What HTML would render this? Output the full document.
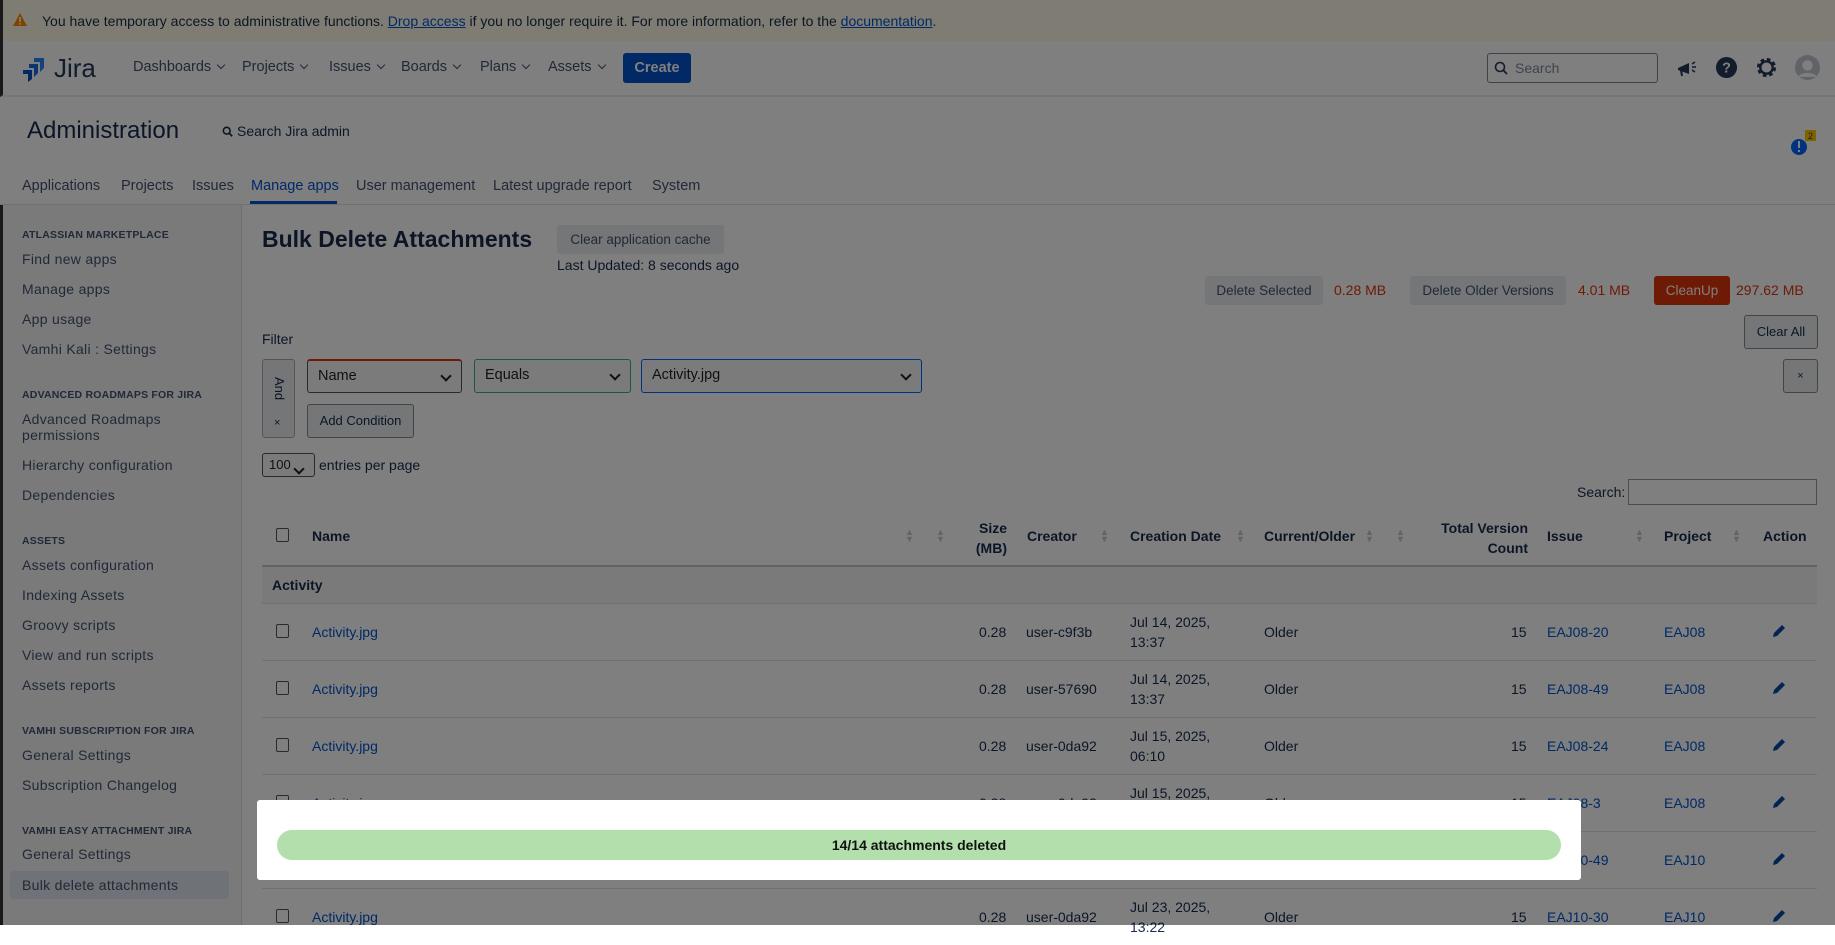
<!DOCTYPE html>
<html><head><meta charset="utf-8">
<style>
*{box-sizing:border-box;margin:0;padding:0}
body{width:1835px;height:925px;overflow:hidden;position:relative;background:#fff;font-family:"Liberation Sans",sans-serif;font-size:14px;color:#172b4d}
.a{position:absolute;white-space:nowrap}
.lnk{color:#0052cc}
.banner{left:0;top:0;width:1835px;height:41px;background:#fffae6;border-left:3px solid #333}
.hdr{left:0;top:41px;width:1835px;height:56px;background:#fff;border-bottom:2px solid #ebecf0;border-left:3px solid #333}
.nav{font-size:14.5px;color:#42526e}
.chev{display:inline-block;margin-left:7px;width:6px;height:6px;border-right:1.8px solid #42526e;border-bottom:1.8px solid #42526e;transform:rotate(45deg);position:relative;top:-3px}
.side{left:0;top:205px;width:242px;height:720px;background:#f4f5f7;border-right:1px solid #dfe1e6;border-left:3px solid #333}
.sh{font-size:10.5px;font-weight:bold;color:#42526e;left:22px;letter-spacing:0.2px}
.si{font-size:14px;color:#42526e;left:22px;letter-spacing:0.3px}
.btn{background:#ebecf0;border-radius:3px;color:#42526e;font-size:14px;text-align:center}
.sel{border:1px solid #555;border-radius:3px;background:#f7f7f7;font-size:14.5px;padding-left:10px;line-height:31px;color:#222}
.sel:after{content:"";position:absolute;right:11px;top:11px;width:6px;height:6px;border-right:2px solid #222;border-bottom:2px solid #222;transform:rotate(45deg)}
.th{font-weight:bold;font-size:14px;color:#172b4d}
.row{left:262px;width:1555px;height:57px;border-top:1px solid #dfe1e6}
.cb{width:13px;height:14px;border:1px solid #555;border-radius:2px;background:#fff}
.ov{left:0;top:0;width:1835px;height:925px;background:rgba(0,0,0,0.5)}
.sort{color:#c1c7d0;font-size:9px;line-height:7px}
</style></head><body>

<div class="a banner"></div>
<svg class="a" style="left:13px;top:13px" width="14" height="13" viewBox="0 0 14 13"><path d="M7 0L14 13H0z" fill="#ff8b00"/><rect x="6.2" y="4" width="1.6" height="5" fill="#fff"/><rect x="6.2" y="10" width="1.6" height="1.6" fill="#fff"/></svg>
<div class="a" style="left:42px;top:13px;font-size:14px;color:#172b4d">You have temporary access to administrative functions. <span class="lnk" style="text-decoration:underline">Drop access</span> if you no longer require it. For more information, refer to the <span class="lnk" style="text-decoration:underline">documentation</span>.</div>

<div class="a hdr"></div>
<svg class="a" style="left:22px;top:56px" width="24" height="26" viewBox="0 0 24 26"><path d="M12 2h10v10l-4 4V6h-6z" fill="#2684ff"/><path d="M7 8h9v9l-4 4V12H7z" fill="#1868db"/><path d="M1 14h9v9l-4 3V18H1z" fill="#0052cc"/></svg>
<div class="a" style="left:54px;top:53px;font-size:26px;color:#253858">Jira</div>
<div class="a nav" style="left:133px;top:59px">Dashboards<span class="chev"></span></div>
<div class="a nav" style="left:242px;top:59px">Projects<span class="chev"></span></div>
<div class="a nav" style="left:329px;top:59px">Issues<span class="chev"></span></div>
<div class="a nav" style="left:401px;top:59px">Boards<span class="chev"></span></div>
<div class="a nav" style="left:480px;top:59px">Plans<span class="chev"></span></div>
<div class="a nav" style="left:548px;top:59px">Assets<span class="chev"></span></div>
<div class="a" style="left:623px;top:53px;width:68px;height:30px;background:#0052cc;border-radius:3px;color:#fff;font-weight:bold;font-size:14.5px;text-align:center;line-height:30px">Create</div>
<div class="a" style="left:1487px;top:53px;width:171px;height:30px;border:1px solid #7a869a;border-radius:3px;background:#fff"></div>
<svg class="a" style="left:1494px;top:61px" width="14" height="14" viewBox="0 0 14 14"><circle cx="6" cy="6" r="4.5" stroke="#253858" stroke-width="1.6" fill="none"/><path d="M9.3 9.3L13 13" stroke="#253858" stroke-width="1.8"/></svg>
<div class="a" style="left:1515px;top:60px;font-size:14px;color:#7a869a">Search</div>
<svg class="a" style="left:1676px;top:57px" width="22" height="22" viewBox="0 0 22 22"><path d="M2 11l11-5v11L2 13z" fill="#253858"/><path d="M5 13l1 6" stroke="#253858" stroke-width="2"/><path d="M16 7l3-2M16 10h4M16 13l3 2" stroke="#253858" stroke-width="1.6"/></svg>
<svg class="a" style="left:1715px;top:56px" width="23" height="23" viewBox="0 0 24 24"><circle cx="12" cy="12" r="11" fill="#253858"/><text x="12" y="17" text-anchor="middle" font-family="Liberation Sans" font-weight="bold" font-size="15" fill="#fff">?</text></svg>
<svg class="a" style="left:1755px;top:56px" width="23" height="23" viewBox="0 0 24 24"><circle cx="12" cy="12" r="8" fill="none" stroke="#253858" stroke-width="4" stroke-dasharray="3.5 2.8"/><circle cx="12" cy="12" r="6.5" fill="none" stroke="#253858" stroke-width="2.5"/></svg>
<svg class="a" style="left:1795px;top:55px" width="25" height="25" viewBox="0 0 24 24"><circle cx="12" cy="12" r="12" fill="#c1c7d0"/><circle cx="12" cy="10" r="5" fill="#fff"/><path d="M3 21c2-5 16-5 18 0" fill="#fff"/></svg>

<div class="a" style="left:27px;top:117px;font-size:24px;color:#172b4d">Administration</div>
<svg class="a" style="left:222px;top:126px" width="11" height="11" viewBox="0 0 14 14"><circle cx="6" cy="6" r="4.3" stroke="#172b4d" stroke-width="2" fill="none"/><path d="M9 9l4 4" stroke="#172b4d" stroke-width="2.2"/></svg>
<div class="a" style="left:237px;top:123px;font-size:14px;color:#172b4d">Search Jira admin</div>
<svg class="a" style="left:1790px;top:128px" width="30" height="28" viewBox="0 0 30 28"><circle cx="9" cy="19" r="8" fill="#0065ff"/><rect x="8" y="13" width="2" height="7" fill="#fff"/><rect x="8" y="22" width="2" height="2" fill="#fff"/><rect x="15" y="2" width="11" height="11" fill="#ffc400"/><text x="20.5" y="11" text-anchor="middle" font-size="9" font-family="Liberation Sans" fill="#333">2</text></svg>

<div class="a" style="left:0;top:204px;width:1835px;height:1px;background:#dfe1e6"></div>
<div class="a nav" style="left:22px;top:178px">Applications</div>
<div class="a nav" style="left:121px;top:178px">Projects</div>
<div class="a nav" style="left:192px;top:178px">Issues</div>
<div class="a nav" style="left:251px;top:178px;color:#0052cc">Manage apps</div>
<div class="a" style="left:250px;top:201px;width:87px;height:3px;background:#0052cc"></div>
<div class="a nav" style="left:356px;top:178px">User management</div>
<div class="a nav" style="left:493px;top:178px">Latest upgrade report</div>
<div class="a nav" style="left:652px;top:178px">System</div>

<div class="a side"></div>
<div class="a" style="left:10px;top:871px;width:219px;height:28px;background:#dfe6f0;border-radius:3px"></div>
<div class="a sh" style="top:229px">ATLASSIAN MARKETPLACE</div>
<div class="a si" style="top:251px">Find new apps</div>
<div class="a si" style="top:281px">Manage apps</div>
<div class="a si" style="top:311px">App usage</div>
<div class="a si" style="top:341px">Vamhi Kali : Settings</div>
<div class="a sh" style="top:389px">ADVANCED ROADMAPS FOR JIRA</div>
<div class="a si" style="top:411px;line-height:16px">Advanced Roadmaps<br>permissions</div>
<div class="a si" style="top:457px">Hierarchy configuration</div>
<div class="a si" style="top:487px">Dependencies</div>
<div class="a sh" style="top:535px">ASSETS</div>
<div class="a si" style="top:557px">Assets configuration</div>
<div class="a si" style="top:587px">Indexing Assets</div>
<div class="a si" style="top:617px">Groovy scripts</div>
<div class="a si" style="top:647px">View and run scripts</div>
<div class="a si" style="top:677px">Assets reports</div>
<div class="a sh" style="top:725px">VAMHI SUBSCRIPTION FOR JIRA</div>
<div class="a si" style="top:747px">General Settings</div>
<div class="a si" style="top:777px">Subscription Changelog</div>
<div class="a sh" style="top:825px">VAMHI EASY ATTACHMENT JIRA</div>
<div class="a si" style="top:846px">General Settings</div>
<div class="a si" style="top:877px">Bulk delete attachments</div>

<div class="a" style="left:262px;top:226px;font-size:23px;font-weight:bold;color:#172b4d">Bulk Delete Attachments</div>
<div class="a btn" style="left:557px;top:225px;width:167px;height:29px;line-height:29px;font-size:13.5px">Clear application cache</div>
<div class="a" style="left:557px;top:257px;font-size:14px">Last Updated: 8 seconds ago</div>

<div class="a btn" style="left:1205px;top:276px;width:118px;height:29px;line-height:29px;font-size:13.5px">Delete Selected</div>
<div class="a" style="left:1334px;top:282px;color:#de350b">0.28 MB</div>
<div class="a btn" style="left:1410px;top:276px;width:156px;height:29px;line-height:29px;font-size:13.5px">Delete Older Versions</div>
<div class="a" style="left:1578px;top:282px;color:#de350b">4.01 MB</div>
<div class="a btn" style="left:1654px;top:276px;width:76px;height:29px;line-height:29px;background:#de350b;color:#fff;font-size:13.5px">CleanUp</div>
<div class="a" style="left:1736px;top:282px;color:#de350b">297.62 MB</div>
<div class="a btn" style="left:1744px;top:315px;width:74px;height:34px;line-height:32px;border:1px solid #888;font-size:13px;color:#172b4d">Clear All</div>

<div class="a" style="left:262px;top:331px">Filter</div>
<div class="a btn" style="left:262px;top:359px;width:33px;height:79px;border:1px solid #aaa"></div>
<div class="a" style="top:377px;font-size:13px;transform:rotate(90deg);transform-origin:left top;left:287px">And</div>
<div class="a" style="left:274px;top:417px;font-size:11px">×</div>
<div class="a sel" style="left:307px;top:359px;width:155px;height:34px;border-top:2px solid #de350b">Name</div>
<div class="a sel" style="left:474px;top:359px;width:157px;height:34px;border-color:#36b37e">Equals</div>
<div class="a sel" style="left:641px;top:359px;width:281px;height:34px;border-color:#0065ff">Activity.jpg</div>
<div class="a btn" style="left:1783px;top:359px;width:35px;height:34px;border:1px solid #888;line-height:32px;font-size:11px;color:#172b4d">×</div>
<div class="a btn" style="left:307px;top:404px;width:107px;height:34px;border:1px solid #888;line-height:32px;font-size:13px;color:#172b4d">Add Condition</div>

<div class="a sel" style="left:262px;top:453px;width:53px;height:24px;line-height:22px;padding-left:6px;font-size:13px">100</div>
<div class="a" style="left:319px;top:457px;font-size:14px">entries per page</div>
<div class="a" style="left:1577px;top:484px;font-size:14px">Search:</div>
<div class="a" style="left:1628px;top:479px;width:189px;height:26px;border:1px solid #999;background:#fff"></div>

<div class="a cb" style="left:276px;top:528px"></div>
<div class="a th" style="left:312px;top:528px">Name</div>
<div class="a sort" style="left:905px;top:529px">▲<br>▼</div><div class="a sort" style="left:936px;top:529px">▲<br>▼</div>
<div class="a th" style="left:950px;top:518px;text-align:right;width:57px;line-height:20px">Size<br>(MB)</div>
<div class="a th" style="left:1027px;top:528px">Creator</div>
<div class="a sort" style="left:1100px;top:529px">▲<br>▼</div>
<div class="a th" style="left:1130px;top:528px">Creation Date</div>
<div class="a sort" style="left:1236px;top:529px">▲<br>▼</div>
<div class="a th" style="left:1264px;top:528px">Current/Older</div>
<div class="a sort" style="left:1365px;top:529px">▲<br>▼</div><div class="a sort" style="left:1396px;top:529px">▲<br>▼</div>
<div class="a th" style="left:1400px;top:518px;text-align:right;width:128px;line-height:20px">Total Version<br>Count</div>
<div class="a th" style="left:1547px;top:528px">Issue</div>
<div class="a sort" style="left:1635px;top:529px">▲<br>▼</div>
<div class="a th" style="left:1664px;top:528px">Project</div>
<div class="a sort" style="left:1732px;top:529px">▲<br>▼</div>
<div class="a th" style="left:1763px;top:528px">Action</div>
<div class="a" style="left:262px;top:565px;width:1555px;height:2px;background:#c1c7d0"></div>
<div class="a" style="left:262px;top:567px;width:1555px;height:36px;background:#f4f5f7"></div>
<div class="a th" style="left:272px;top:577px">Activity</div>

<div class="a row" style="top:603px"></div>
<div class="a row" style="top:660px"></div>
<div class="a row" style="top:717px"></div>
<div class="a row" style="top:774px"></div>
<div class="a row" style="top:831px"></div>
<div class="a row" style="top:888px"></div>

<div class="a cb" style="left:276px;top:624px"></div><div class="a lnk" style="left:312px;top:624px">Activity.jpg</div><div class="a" style="left:979px;top:624px">0.28</div><div class="a" style="left:1026px;top:624px">user-c9f3b</div><div class="a" style="left:1130px;top:612px;line-height:20px">Jul 14, 2025,<br>13:37</div><div class="a" style="left:1264px;top:624px">Older</div><div class="a" style="left:1511px;top:624px">15</div><div class="a lnk" style="left:1547px;top:624px">EAJ08-20</div><div class="a lnk" style="left:1664px;top:624px">EAJ08</div>
<div class="a cb" style="left:276px;top:681px"></div><div class="a lnk" style="left:312px;top:681px">Activity.jpg</div><div class="a" style="left:979px;top:681px">0.28</div><div class="a" style="left:1026px;top:681px">user-57690</div><div class="a" style="left:1130px;top:669px;line-height:20px">Jul 14, 2025,<br>13:37</div><div class="a" style="left:1264px;top:681px">Older</div><div class="a" style="left:1511px;top:681px">15</div><div class="a lnk" style="left:1547px;top:681px">EAJ08-49</div><div class="a lnk" style="left:1664px;top:681px">EAJ08</div>
<div class="a cb" style="left:276px;top:738px"></div><div class="a lnk" style="left:312px;top:738px">Activity.jpg</div><div class="a" style="left:979px;top:738px">0.28</div><div class="a" style="left:1026px;top:738px">user-0da92</div><div class="a" style="left:1130px;top:726px;line-height:20px">Jul 15, 2025,<br>06:10</div><div class="a" style="left:1264px;top:738px">Older</div><div class="a" style="left:1511px;top:738px">15</div><div class="a lnk" style="left:1547px;top:738px">EAJ08-24</div><div class="a lnk" style="left:1664px;top:738px">EAJ08</div>
<div class="a cb" style="left:276px;top:795px"></div><div class="a lnk" style="left:312px;top:795px">Activity.jpg</div><div class="a" style="left:979px;top:795px">0.28</div><div class="a" style="left:1026px;top:795px">user-0da92</div><div class="a" style="left:1130px;top:783px;line-height:20px">Jul 15, 2025,<br>06:10</div><div class="a" style="left:1264px;top:795px">Older</div><div class="a" style="left:1511px;top:795px">15</div><div class="a lnk" style="left:1547px;top:795px">EAJ08-3</div><div class="a lnk" style="left:1664px;top:795px">EAJ08</div>
<div class="a lnk" style="left:1547px;top:852px">EAJ10-49</div><div class="a lnk" style="left:1664px;top:852px">EAJ10</div>
<div class="a cb" style="left:276px;top:909px"></div><div class="a lnk" style="left:312px;top:909px">Activity.jpg</div><div class="a" style="left:979px;top:909px">0.28</div><div class="a" style="left:1026px;top:909px">user-0da92</div><div class="a" style="left:1130px;top:897px;line-height:20px">Jul 23, 2025,<br>13:22</div><div class="a" style="left:1264px;top:909px">Older</div><div class="a" style="left:1511px;top:909px">15</div><div class="a lnk" style="left:1547px;top:909px">EAJ10-30</div><div class="a lnk" style="left:1664px;top:909px">EAJ10</div>

<svg class="a" style="left:1771px;top:623px" width="16" height="16" viewBox="0 0 16 16"><path d="M11 2l3 3-8 8-4 1 1-4z" fill="#0747a6"/></svg>
<svg class="a" style="left:1771px;top:680px" width="16" height="16" viewBox="0 0 16 16"><path d="M11 2l3 3-8 8-4 1 1-4z" fill="#0747a6"/></svg>
<svg class="a" style="left:1771px;top:737px" width="16" height="16" viewBox="0 0 16 16"><path d="M11 2l3 3-8 8-4 1 1-4z" fill="#0747a6"/></svg>
<svg class="a" style="left:1771px;top:794px" width="16" height="16" viewBox="0 0 16 16"><path d="M11 2l3 3-8 8-4 1 1-4z" fill="#0747a6"/></svg>
<svg class="a" style="left:1771px;top:851px" width="16" height="16" viewBox="0 0 16 16"><path d="M11 2l3 3-8 8-4 1 1-4z" fill="#0747a6"/></svg>
<svg class="a" style="left:1771px;top:908px" width="16" height="16" viewBox="0 0 16 16"><path d="M11 2l3 3-8 8-4 1 1-4z" fill="#0747a6"/></svg>

<div class="a ov"></div>
<div class="a" style="left:257px;top:800px;width:1324px;height:80px;background:#fff;border-radius:3px"></div>
<div class="a" style="left:277px;top:830px;width:1284px;height:30px;background:#b3dfad;border-radius:15px;text-align:center;line-height:30px;font-weight:bold;font-size:14px;color:#111">14/14 attachments deleted</div>
</body></html>
